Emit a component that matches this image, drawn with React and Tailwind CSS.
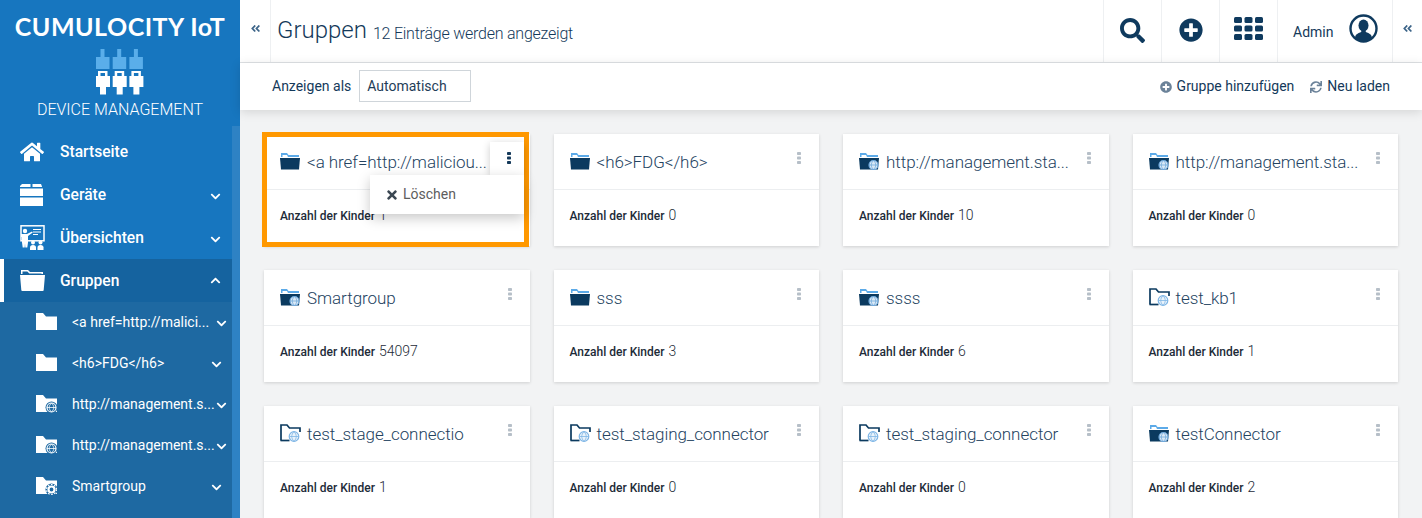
import React from "react";
import { FaHome, FaSearch, FaPlusCircle, FaTimes, FaAngleDoubleLeft, FaChevronDown, FaChevronUp, FaSync } from "react-icons/fa";

function Globe({ x = 11, y = 9, r = 5, fill = "#dbe9f6", stroke = "#3f87c8" }) {
  return (
    <g>
      <circle cx={x} cy={y} r={r} fill={fill} stroke={stroke} strokeWidth="1.2" />
      <path d={`M${x - r} ${y}h${2 * r}M${x} ${y - r}c-3 3 -3 ${2 * r - 3} 0 ${2 * r}M${x} ${y - r}c3 3 3 ${2 * r - 3} 0 ${2 * r}`} fill="none" stroke={stroke} strokeWidth="0.8" />
    </g>
  );
}

function FolderIcon({ kind }) {
  if (kind === "outline") {
    return (
      <svg width="21" height="18" viewBox="0 0 21 18" className="shrink-0">
        <path d="M1 16.500V1h6l2.500 3H20v4" fill="none" stroke="#0b3a5f" strokeWidth="1.700" />
        <path d="M0.500 16.500h9" stroke="#0b3a5f" strokeWidth="1.700" />
        <Globe x={14} y={12.500} r={4.800} fill="#eaf3fb" stroke="#7fb6e6" />
      </svg>
    );
  }
  return (
    <svg width="20" height="18" viewBox="0 0 20 18" className="shrink-0">
      <path d="M1 5V1h6l1.500 2H19v2H8L7 3H2.500v2z" fill="#5caae8" />
      <path d="M0 6h20l-1 11.500H1z" fill="#0b3a5f" />
      {kind === "globe" && <Globe x={14.500} y={13} r={4.500} fill="#dbe9f6" stroke="#6fa9dc" />}
    </svg>
  );
}

function SideFolder({ badge }) {
  return (
    <svg width="21" height="18" viewBox="0 0 21 18">
      <path d="M0 0h7l3 3.500h11V17H0z" fill="#fff" />
      {badge && <circle cx="15.500" cy="12.500" r="6" fill="#1e69a2" />}
      {badge === "globe" && <Globe x={15.500} y={12.500} r={4.500} fill="#1e69a2" stroke="#fff" />}
      {badge === "gear" && (
        <g>
          <circle cx="15.500" cy="12.500" r="3" fill="none" stroke="#fff" strokeWidth="2.200" />
          <circle cx="15.500" cy="12.500" r="5" fill="none" stroke="#fff" strokeWidth="1.200" strokeDasharray="1.600 1.600" />
        </g>
      )}
    </svg>
  );
}

function Logo() {
  return (
    <svg width="48" height="46" viewBox="0 0 48 46" className="mt-[9px]">
      {[0, 16.700, 33.400].map((dx) => (
        <g key={dx} transform={`translate(${dx} 0)`}>
          <rect x="4.500" y="0" width="4" height="8" fill="#5aaeea" />
          <rect x="0" y="8" width="13.500" height="12" fill="#5aaeea" />
          <path fillRule="evenodd" d="M2 22h9.500v5h2.500v11h-4v7.500H4V38H0V27h2zM4.500 24v3h4.500v-3z" fill="#fff" />
        </g>
      ))}
    </svg>
  );
}

function Bricks() {
  return (
    <svg width="23" height="22" viewBox="0 0 23 22">
      <path d="M2 0h8.500v3H0V2zM12.500 0H21l1 2.500V3H12.500zM0 4.500h23V12H0zM0 13.500h23V22H0z" fill="#fff" />
    </svg>
  );
}

function Board() {
  return (
    <svg width="25" height="25" viewBox="0 0 25 25">
      <rect x="1" y="0.800" width="23" height="15" fill="none" stroke="#fff" strokeWidth="1.500" />
      <path d="M13 4.500h8M13 7h8M13 9.500h5" stroke="#fff" strokeWidth="1" />
      <circle cx="5" cy="6" r="2.200" fill="#fff" />
      <path d="M1 9h6l5-2.500.8 1L8 11v6.500l-.7 5H5.300l-.3-4-.3 4H2.700L2 17.500V12l-1 0z" fill="#fff" />
      <circle cx="13" cy="17.500" r="2" fill="#fff" />
      <path d="M10 25v-2.500a3 2.500 0 0 1 6 0V25z" fill="#fff" />
      <circle cx="20.500" cy="17.500" r="2" fill="#fff" />
      <path d="M17.500 25v-2.500a3 2.500 0 0 1 6 0V25z" fill="#fff" />
    </svg>
  );
}

function OpenFolderWhite() {
  return (
    <svg width="25" height="21" viewBox="0 0 25 21">
      <path d="M1 4V0h7l2 2h13v2h-1.500V3.500H9.300L7.300 1.500H2.500V4z" fill="#fff" />
      <path d="M0 5h25l-1.300 15a1 1 0 0 1-1 1H2.300a1 1 0 0 1-1-1z" fill="#fff" />
    </svg>
  );
}

function NavRow({ icon, label, chevron, active }) {
  return (
    <div className={`h-[43px] flex items-center text-[15.6px] font-medium text-white ${active ? "bg-[#15639f] border-l-4 border-white pl-[16px]" : "pl-[20px]"}`}>
      <div className="w-[40px] flex items-center">{icon}</div>
      <span className="pt-[2px]">{label}</span>
      {chevron === "down" && <FaChevronDown className="ml-auto mr-[11px] mt-[3px] text-[11px]" />}
      {chevron === "up" && <FaChevronUp className="ml-auto mr-[11px] text-[11px]" />}
    </div>
  );
}

function SubRow({ badge, label, far }) {
  return (
    <div className="h-[41px] flex items-center pl-[36px] text-[14px] text-white bg-[#1e69a2]">
      <div className="w-[36px] flex items-center -mt-[1px]"><SideFolder badge={badge} /></div>
      <span className="whitespace-nowrap">{label}</span>
      <FaChevronDown className={`ml-auto mt-[2px] text-[11px] ${far ? "mr-[5px]" : "mr-[10px]"}`} />
    </div>
  );
}

function Dots({ className }) {
  return (
    <svg width="4" height="12" viewBox="0 0 4 12" className={className} fill="currentColor">
      <rect x="0" y="0" width="4" height="3" rx="0.800" />
      <rect x="0" y="4.500" width="4" height="3" rx="0.800" />
      <rect x="0" y="9" width="4" height="3" rx="0.800" />
    </svg>
  );
}

function Card({ icon, title, count, selected }) {
  return (
    <div className="relative h-[112px] bg-white shadow-[0_1px_3px_rgba(0,0,0,0.15)]">
      <div className="h-[56px] flex items-center pl-[16px] border-b border-[#eceef0]">
        <div className="w-[27px] shrink-0 -mt-[2px]"><FolderIcon kind={icon} /></div>
        <div className="whitespace-nowrap translate-y-[1px] text-[17px] tracking-[-0.05px] font-light text-[#24435f]">{title}</div>
      </div>
      <div className="pl-[16px] pt-[15px] flex items-baseline gap-[4px] text-[#1d2b38]">
        <span className="text-[12px] font-medium">Anzahl der Kinder</span>
        <span className="text-[14px] font-light">{count}</span>
      </div>
      {!selected && <Dots className="absolute top-[18px] right-[18px] text-[#b6bfc8]" />}
      {selected && (
        <>
          <div className="absolute -left-[2px] -top-[2px] w-[267px] h-[115px] border-[5px] border-[#ff9800] pointer-events-none" />
          <div className="absolute top-[8px] left-[226px] w-[34px] h-[33px] bg-white shadow-[0_2px_8px_rgba(0,0,0,0.2)] flex justify-center pt-[10px] pl-[3px]">
            <Dots className="text-[#14395a]" />
          </div>
          <div className="absolute top-[41px] left-[106px] w-[154px] h-[39px] bg-white shadow-[0_4px_12px_rgba(0,0,0,0.22)] flex items-center pl-[15px] text-[14px] text-[#5d5d5d]">
            <FaTimes className="text-[14px] mr-[4px] text-[#3b4752]" />
            <span>Löschen</span>
          </div>
        </>
      )}
    </div>
  );
}

const cards = [
  ["open", "<a href=http://maliciou...", "1", true],
  ["open", "<h6>FDG</h6>", "0"],
  ["globe", "http://management.sta...", "10"],
  ["globe", "http://management.sta...", "0"],
  ["globe", "Smartgroup", "54097"],
  ["open", "sss", "3"],
  ["globe", "ssss", "6"],
  ["outline", "test_kb1", "1"],
  ["outline", "test_stage_connectio", "1"],
  ["outline", "test_staging_connector", "0"],
  ["outline", "test_staging_connector", "0"],
  ["globe", "testConnector", "2"],
];

function TopCell({ children, className = "" }) {
  return <div className={`h-full flex items-center justify-center border-l border-[#eef0f2] ${className}`}>{children}</div>;
}

export default function App() {
  return (
    <div className="flex h-[518px] w-[1422px] overflow-hidden bg-[#f2f3f4] font-['Roboto',sans-serif]">
      <aside className="w-[240px] shrink-0 h-full flex flex-col bg-[#1776bf]">
        <div className="h-[126px] shrink-0 flex flex-col items-center">
          <div className="mt-[12px] text-[25px] leading-[28px] font-bold text-white tracking-[0.5px] whitespace-nowrap font-['Lato',sans-serif]">CUMULOCITY IoT</div>
          <Logo />
          <div className="mt-[6px] text-[16px] leading-[18px] font-light text-white whitespace-nowrap">DEVICE MANAGEMENT</div>
        </div>
        <div className="flex-1 flex min-h-0">
          <nav className="flex-1 pt-[4px] overflow-hidden">
            <NavRow icon={<FaHome className="text-[24px]" />} label="Startseite" />
            <NavRow icon={<Bricks />} label="Geräte" chevron="down" />
            <NavRow icon={<Board />} label="Übersichten" chevron="down" />
            <NavRow icon={<OpenFolderWhite />} label="Gruppen" chevron="up" active />
            <SubRow label="<a href=http://malici..." far />
            <SubRow label="<h6>FDG</h6>" />
            <SubRow label="http://management.s..." badge="globe" far />
            <SubRow label="http://management.s..." badge="globe" far />
            <SubRow label="Smartgroup" badge="gear" />
            <SubRow label="" badge="globe" />
          </nav>
          <div className="w-[8px] bg-[#2e82c4]" />
        </div>
      </aside>
      <main className="flex-1 min-w-0 flex flex-col">
        <header className="h-[63px] shrink-0 bg-white border-b border-[#dfe2e5] flex items-center">
          <div className="w-[31px] h-full flex items-center justify-center border-r border-[#eef0f2] text-[#14395a]">
            <FaAngleDoubleLeft className="text-[11px] -mt-[5px] text-[#3c6488]" />
          </div>
          <div className="ml-[6px] flex items-baseline whitespace-nowrap text-[#14395a] font-light">
            <span className="text-[24px] -mt-[2px]">Gruppen</span>
            <span className="ml-[6px] text-[16px] tracking-[-0.23px] translate-y-[1px]">12 Einträge werden angezeigt</span>
          </div>
          <div className="ml-auto h-full flex text-[#0f3a5e]">
            <TopCell className="w-[58px]"><FaSearch className="text-[25px] -mt-[2px]" /></TopCell>
            <TopCell className="w-[58px]"><FaPlusCircle className="text-[24px] -mt-[2px]" /></TopCell>
            <TopCell className="w-[58px]">
              <svg width="29" height="23" viewBox="0 0 29 23" className="-mt-[5px]" fill="currentColor">
                {[0, 8.500, 17].map((y) => [0, 10.500, 21].map((x) => <rect key={`${x}-${y}`} x={x} y={y} width="8" height="6" rx="1.500" />))}
              </svg>
            </TopCell>
            <TopCell className="w-[115px] justify-start pl-[15px] gap-[16px]">
              <span className="text-[14px] text-[#14395a] translate-y-[1px]">Admin</span>
              <svg width="29" height="29" viewBox="0 0 29 29" className="-mt-[6px]">
                <circle cx="14.500" cy="14.500" r="13" fill="#fff" stroke="#0f3a5e" strokeWidth="2.400" />
                <ellipse cx="14.500" cy="11.500" rx="5" ry="6" fill="#0f3a5e" />
                <path d="M6 24c0-4 4-5 6-6l1-2h3l1 2c2 1 6 2 6 6a12 12 0 0 1-17 0z" fill="#0f3a5e" />
              </svg>
            </TopCell>
            <TopCell className="w-[30px]"><FaAngleDoubleLeft className="text-[11px] -mt-[5px] text-[#3c6488]" /></TopCell>
          </div>
        </header>
        <div className="relative z-10 h-[47px] shrink-0 bg-white shadow-[0_2px_10px_rgba(0,0,0,0.13)] flex items-center pl-[32px] pr-[32px] text-[14px] text-[#14395a]">
          <span>Anzeigen als</span>
          <div className="ml-[8px] -mt-[1px] w-[112px] h-[32px] border border-[#cfd5da] flex items-center pl-[7px] text-[#1f3d58]">Automatisch</div>
          <div className="ml-auto flex items-center">
            <FaPlusCircle className="text-[12px] text-[#6b8299] mr-[5px]" />
            <span>Gruppe hinzufügen</span>
            <FaSync className="ml-[16px] mr-[5px] text-[12px] text-[#6b8299]" />
            <span>Neu laden</span>
          </div>
        </div>
        <div className="flex-1 min-h-0 overflow-hidden pt-[24px] px-[24px]">
          <div className="grid grid-cols-4 gap-x-[24px] gap-y-[24px]">
            {cards.map(([icon, title, count, selected], i) => (
              <Card key={i} icon={icon} title={title} count={count} selected={selected} />
            ))}
          </div>
        </div>
      </main>
    </div>
  );
}
